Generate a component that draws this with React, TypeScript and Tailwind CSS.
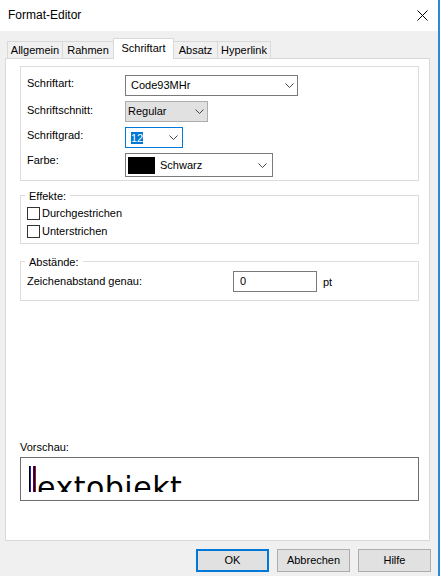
import React from "react";

function Chevron() {
  return (
    <svg width="9" height="5" viewBox="0 0 9 5" className="shrink-0">
      <polyline points="0.5,0.5 4.5,4.5 8.5,0.5" fill="none" stroke="#444" strokeWidth="1" />
    </svg>
  );
}

function Tab({ label, w, selected, first }: { label: string; w: string; selected?: boolean; first?: boolean }) {
  if (selected) {
    return (
      <div
        className={`${w} -ml-px h-[21px] -mb-px relative z-10 bg-white border-l border-t border-r border-[#d9d9d9] pt-[3px] text-center leading-[13px]`}
      >
        {label}
      </div>
    );
  }
  return (
    <div
      className={`${w} ${first ? "" : "-ml-px"} h-[17px] bg-[#f0f0f0] border-l border-t border-r border-[#d9d9d9] pt-[2px] text-center leading-[13px]`}
    >
      {label}
    </div>
  );
}

function Check({ label }: { label: string }) {
  return (
    <div className="h-[17px] flex items-center">
      <div className="w-[13px] h-[13px] border border-[#333333] bg-white shrink-0" />
      <span className="ml-[2px] leading-[13px]">{label}</span>
    </div>
  );
}

export default function App() {
  return (
    <div className="w-[440px] h-[576px] bg-[#f0f0f0] border-r-2 border-[#2a8ad4] flex flex-col font-['Liberation_Sans',Arial,sans-serif] text-[11px] text-black overflow-hidden">
      {/* Title bar */}
      <div className="h-[31px] bg-white flex items-center justify-between pl-[8px] pr-[10px] shrink-0">
        <span className="text-[12px] leading-[15px]">Format-Editor</span>
        <svg width="11" height="11" viewBox="0 0 11 11">
          <line x1="0.5" y1="0.5" x2="10.5" y2="10.5" stroke="#000" strokeWidth="1" />
          <line x1="10.5" y1="0.5" x2="0.5" y2="10.5" stroke="#000" strokeWidth="1" />
        </svg>
      </div>

      <div className="ml-[5px] w-[425px] flex flex-col">
        {/* Tabs */}
        <div className="h-[20px] mt-[7px] flex items-end pl-[2px]">
          <Tab label="Allgemein" w="w-[56px]" first />
          <Tab label="Rahmen" w="w-[52px]" />
          <Tab label="Schriftart" w="w-[61px]" selected />
          <Tab label="Absatz" w="w-[45px]" />
          <Tab label="Hyperlink" w="w-[54px]" />
        </div>

        {/* Panel */}
        <div className="h-[483px] border border-[#d9d9d9] bg-white flex flex-col pl-[14px] pt-[7px]">
          {/* Font group */}
          <div className="w-[399px] h-[115px] border border-[#dcdcdc] pl-[6px] pt-[8px] flex flex-col">
            <div className="h-[21px] flex">
              <div className="w-[98px] pt-[2px] leading-[13px]">Schriftart:</div>
              <div className="w-[173px] h-[21px] border border-[#7a7a7a] bg-white flex items-center justify-between pl-[5px] pr-[3px]">
                <span className="leading-[13px]">Code93MHr</span>
                <Chevron />
              </div>
            </div>
            <div className="h-[21px] flex mt-[5px]">
              <div className="w-[98px] pt-[3px] leading-[13px]">Schriftschnitt:</div>
              <div className="w-[83px] h-[21px] border border-[#adadad] bg-[#e1e1e1] flex items-center justify-between pl-[2px] pr-[3px]">
                <span className="leading-[13px]">Regular</span>
                <Chevron />
              </div>
            </div>
            <div className="h-[21px] flex mt-[5px]">
              <div className="w-[98px] pt-[2px] leading-[13px]">Schriftgrad:</div>
              <div className="w-[58px] h-[21px] border border-[#0078d7] bg-white flex items-center justify-between pl-[5px] pr-[4px]">
                <span className="leading-[12px] bg-[#0078d7] text-white">12</span>
                <Chevron />
              </div>
            </div>
            <div className="h-[24px] flex mt-[5px]">
              <div className="w-[98px] pt-[1px] leading-[13px]">Farbe:</div>
              <div className="w-[148px] h-[24px] border border-[#7a7a7a] bg-white flex items-center pl-[2px] pr-[5px]">
                <div className="w-[27px] h-[17px] bg-black shrink-0" />
                <span className="ml-[5px] leading-[13px] flex-1">Schwarz</span>
                <Chevron />
              </div>
            </div>
          </div>

          {/* Effekte */}
          <fieldset className="w-[399px] mt-[6px] border border-[#dcdcdc] pl-[6px] pt-[2px] pb-[3px] min-w-0">
            <legend className="ml-[-2px] px-[4px] pt-[3px] leading-[13px]">Effekte:</legend>
            <div className="flex flex-col gap-[1px]">
              <Check label="Durchgestrichen" />
              <Check label="Unterstrichen" />
            </div>
          </fieldset>

          {/* Abstände */}
          <fieldset className="w-[399px] mt-[9px] border border-[#dcdcdc] pl-[6px] pt-[2px] pb-[8px] min-w-0">
            <legend className="ml-[-2px] px-[4px] pt-[3px] leading-[13px]">Abstände:</legend>
            <div className="h-[21px] flex items-center">
              <div className="w-[206px] leading-[13px]">Zeichenabstand genau:</div>
              <div className="w-[84px] h-[21px] border border-[#7a7a7a] bg-white flex items-center pl-[6px]">
                <span className="leading-[13px]">0</span>
              </div>
              <span className="ml-[6px] leading-[13px] pt-[2px]">pt</span>
            </div>
          </fieldset>

          {/* Vorschau */}
          <div className="mt-auto mb-[39px] flex flex-col">
            <div className="leading-[13px] mb-[3px]">Vorschau:</div>
            <div className="w-[399px] h-[44px] border border-[#6e6e6e] bg-white">
              <div className="h-[34px] overflow-hidden flex items-start pl-[8px]">
                <div className="mt-[8px] flex shrink-0">
                  <div className="w-[1px] h-[40px] bg-black" />
                  <div className="w-[1px] h-[40px] bg-[#2020b0]" />
                  <div className="w-[2px] h-[40px] bg-white" />
                  <div className="w-[1px] h-[40px] bg-[#500060]" />
                  <div className="w-[1px] h-[40px] bg-black" />
                  <div className="w-[1px] h-[40px] bg-[#a01050]" />
                </div>
                <span className="ml-[1px] mt-[12px] text-[30px] leading-[36px] tracking-[0.5px] font-['DejaVu_Sans',sans-serif] whitespace-nowrap">
                  extobjekt
                </span>
              </div>
            </div>
          </div>
        </div>

        {/* Buttons */}
        <div className="mt-[8px] flex justify-end gap-[8px] mr-[-1px]">
          <button className="w-[73px] h-[23px] border-2 border-[#0078d7] bg-[#e1e1e1] leading-[13px]">OK</button>
          <button className="w-[73px] h-[23px] border border-[#adadad] bg-[#e1e1e1] leading-[13px]">Abbrechen</button>
          <button className="w-[73px] h-[23px] border border-[#adadad] bg-[#e1e1e1] leading-[13px]">Hilfe</button>
        </div>
      </div>
    </div>
  );
}
